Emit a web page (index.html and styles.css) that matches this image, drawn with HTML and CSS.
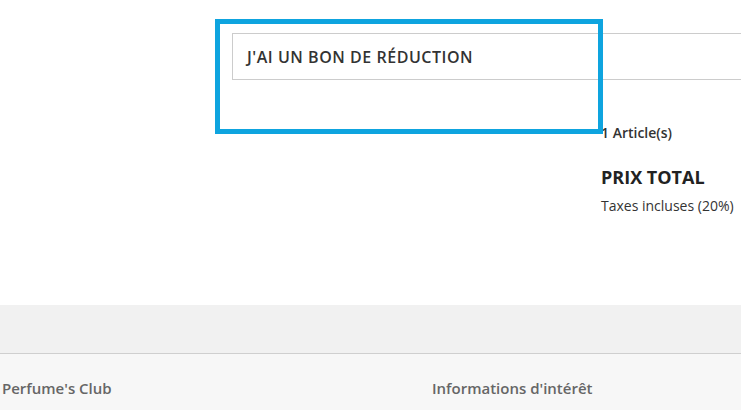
FILE: index.html
```html
<!doctype html>
<html>
<head>
    <meta charset="UTF-8">
    <title>Panier</title>
    <link rel="stylesheet" href="styles.css">
</head>
<body>
<div class="m-cart">
    <div class="coupon">
        <h3 class="coupon-hd">J'AI UN BON DE RÉDUCTION</h3>
    </div>
    <div class="summary">
        <p class="count">1 Article(s)</p>
        <h2 class="total">PRIX TOTAL</h2>
        <p class="tax">Taxes incluses (20%)</p>
    </div>
    <!-- cadre de mise en évidence -->
    <div class="highlight"></div>
</div>
<div class="m-footer">
    <div class="band"></div>
    <div class="cols">
        <h4 class="col">Perfume's Club</h4>
        <h4 class="col">Informations d'intérêt</h4>
    </div>
</div>
</body>
</html>
```

FILE: styles.css
```css
html, body, h2, h3, h4, p { margin: 0; padding: 0; }
body { width: 741px; height: 410px; overflow: hidden; background: #fff; font-family: 'Open Sans', 'Liberation Sans', sans-serif; color: #333; }

.m-cart { position: relative; height: 305px; padding-top: 33px; box-sizing: border-box; }
.m-cart .coupon { margin-left: 232px; width: 560px; height: 47px; border: 1px solid #ccc; box-sizing: border-box; display: flex; align-items: center; padding-left: 14px; }
.m-cart .coupon-hd { font-size: 16px; font-weight: 600; letter-spacing: 0.53px; color: #333; }
.m-cart .summary { margin: 43px 0 0 601px; }
.m-cart .count { font-size: 14px; font-weight: 600; line-height: 19px; }
.m-cart .total { margin-top: 23px; font-size: 18px; font-weight: 700; line-height: 24px; color: #222; }
.m-cart .tax { margin-top: 7px; font-size: 14px; line-height: 19px; }
.m-cart .highlight { position: absolute; left: 215px; top: 19px; width: 388px; height: 115px; border: 5px solid #0ea4df; box-sizing: border-box; }

.m-footer .band { height: 48px; background: #f1f1f1; border-bottom: 1px solid #cfcfcf; }
.m-footer .cols { display: flex; height: 56px; background: #f7f7f7; padding-top: 24px; }
.m-footer .col { flex: none; width: 430px; padding-left: 2px; box-sizing: border-box; font-size: 15px; font-weight: 600; color: #666; line-height: 20px; }
```
